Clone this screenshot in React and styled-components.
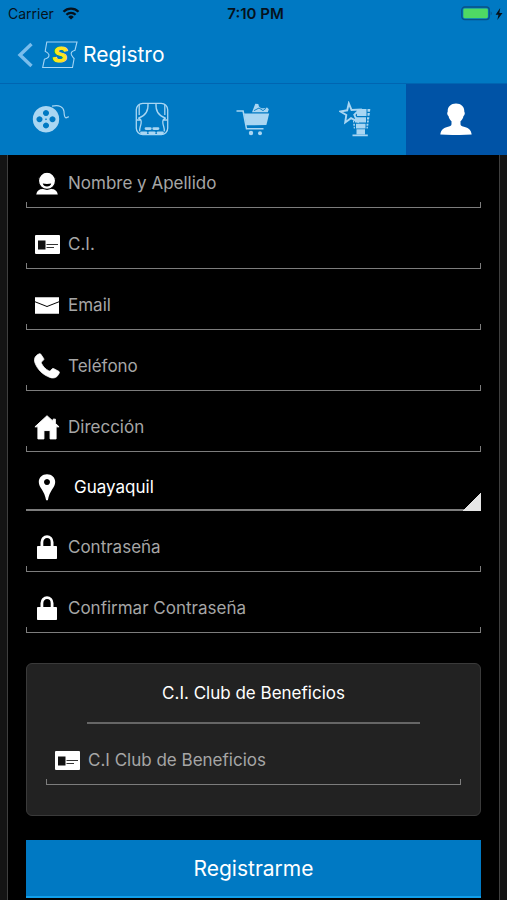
import React, { useState } from "react";
import styled, { createGlobalStyle } from "styled-components";

const GlobalStyle = createGlobalStyle`
  * {
    box-sizing: border-box;
  }

  body {
    margin: 0;
    background: #141414;
    color: #fff;
    font-family: Inter, "Liberation Sans", sans-serif;
  }

  button, input, select {
    font-family: inherit;
  }
`;

const Screen = styled.div`
  display: flex;
  flex-direction: column;
  min-height: 100vh;
`;

const Header = styled.header`
  background: #0079c3;
  border-bottom: 1px solid #0065b1;
`;

const StatusBar = styled.div`
  display: grid;
  grid-template-columns: 1fr auto 1fr;
  align-items: center;
  height: 27px;
  padding: 0 4px 0 8px;
  color: #06121c;
  font-size: 14px;
`;

const StatusLeft = styled.div`
  display: flex;
  align-items: center;
  gap: 8px;
`;

const StatusRight = styled.div`
  display: flex;
  align-items: center;
  justify-content: flex-end;
  gap: 2px;
`;

const Clock = styled.span`
  font-size: 15px;
  font-weight: 600;
`;

const TitleBar = styled.div`
  display: flex;
  align-items: center;
  height: 56px;
  padding: 0 16px;
`;

const BackButton = styled.button`
  display: flex;
  padding: 0;
  margin-right: 8px;
  border: 0;
  background: none;
  cursor: pointer;
`;

const Title = styled.h1`
  margin: 0 0 0 5px;
  font-size: 21px;
  line-height: 28px;
  font-weight: 400;
`;

const Tabs = styled.nav`
  display: grid;
  grid-template-columns: repeat(5, 1fr);
  background: #0079c3;
`;

const Tab = styled.button`
  display: flex;
  align-items: center;
  justify-content: center;
  height: 71px;
  padding: 0 0 2px;
  border: 0;
  background: ${({ $active }) => ($active ? "#0053a6" : "transparent")};
  color: ${({ $active }) => ($active ? "#fff" : "#a9d6f2")};
  cursor: pointer;
`;

const Panel = styled.form`
  flex: 1;
  display: flex;
  flex-direction: column;
  margin: 0 7px;
  padding: 3px 18px 2px;
  border: solid #3f3f3f;
  border-width: 0 1px;
  background: #000;
`;

const Fields = styled.div`
  display: flex;
  flex-direction: column;
  gap: 11px;
`;

const tick = "linear-gradient(#7d7d7d, #7d7d7d)";

const Field = styled.div`
  display: flex;
  align-items: center;
  height: 50px;
  padding-left: 8px;
  background: ${tick} left bottom / 1px 6px no-repeat,
    ${tick} right bottom / 1px 6px no-repeat,
    ${tick} left bottom / 100% 1px no-repeat;
`;

const SelectField = styled(Field)`
  height: 48px;
  background: linear-gradient(135deg, transparent 50%, #e6e6e6 50%) right bottom /
      18px 19px no-repeat,
    ${tick} left bottom / 100% 2px no-repeat;
`;

const FieldIcon = styled.label`
  display: flex;
  justify-content: center;
  width: 26px;
  margin-right: 8px;
`;

const Input = styled.input`
  flex: 1;
  min-width: 0;
  height: 40px;
  padding: 0;
  border: 0;
  outline: 0;
  background: transparent;
  color: #fff;
  font-size: 17px;

  &::placeholder {
    color: #a6a6a6;
    opacity: 1;
  }
`;

const Select = styled.select`
  flex: 1;
  min-width: 0;
  height: 40px;
  padding: 0 24px 0 6px;
  border: 0;
  outline: 0;
  appearance: none;
  background: transparent;
  color: #fff;
  font-size: 17px;

  option {
    background: #222;
  }
`;

const Card = styled.section`
  margin: 30px 0 24px;
  padding: 1px 19px 30px;
  border: 1px solid #3a3a3a;
  border-radius: 6px;
  background: #222;
`;

const CardTitle = styled.h2`
  margin: 0 41px 11px;
  border-bottom: 2px solid #666;
  font-size: 17px;
  line-height: 57px;
  font-weight: 400;
  text-align: center;
`;

const SubmitButton = styled.button`
  height: 58px;
  padding: 0;
  border: 0;
  border-bottom: 2px solid #129fea;
  background: #0079c3;
  color: #fff;
  font-size: 21px;
  cursor: pointer;
`;

const WifiIcon = () => (
  <svg width="18" height="13" viewBox="0 0 18 13" fill="none" stroke="#06121c" strokeWidth="2.3">
    <path d="M1.5 4.8a10.6 10.6 0 0 1 15 0" />
    <path d="M4.4 7.8a6.6 6.6 0 0 1 9.2 0" />
    <path d="M9 12.6 6.2 9.9a4 4 0 0 1 5.6 0z" fill="#06121c" stroke="none" />
  </svg>
);

const BatteryIcon = () => (
  <svg width="32" height="15" viewBox="0 0 32 15">
    <rect x="0.8" y="1" width="27.5" height="12.6" rx="3" fill="none" stroke="#0a5286" strokeWidth="1.3" />
    <rect x="2.3" y="2.4" width="24.6" height="9.8" rx="1.4" fill="#4fd964" />
    <path d="M29.7 5.2q2 2.1 0 4.2z" fill="#0a5286" />
  </svg>
);

const BoltIcon = () => (
  <svg width="8" height="12" viewBox="0 0 8 12">
    <path d="M5.2 0 .6 6.7h2.9L2.3 12 7.5 4.9H4.4z" fill="#06121c" />
  </svg>
);

const BackIcon = () => (
  <svg width="18" height="26" viewBox="0 0 18 26" fill="none">
    <path d="M15.5 2 4 13l11.5 11" stroke="#79bdec" strokeWidth="3.4" />
  </svg>
);

const TicketLogo = () => (
  <svg width="36" height="28" viewBox="0 0 36 28">
    <path
      d="M4.8 1H35l-2 8.2c-3.4 1-4.4 2.7-3.5 4.8 1 1.7 1.6 2.7 2.6 3.5l-1.6 9H.7l1.7-8.2c3-.8 5-2.6 4.5-4.6-.4-1.7-1.6-2.4-3.7-3.5z"
      fill="none"
      stroke="#a5d5f5"
      strokeWidth="1.1"
    />
    <text
      x="18"
      y="21"
      fill="#ffe61c"
      stroke="#ffe61c"
      strokeWidth="1"
      textAnchor="middle"
      fontFamily="Liberation Sans, sans-serif"
      fontSize="22"
      fontStyle="italic"
      fontWeight="700"
    >
      S
    </text>
  </svg>
);

const ReelIcon = () => (
  <svg width="38" height="30" viewBox="0 0 38 30">
    <path
      fill="currentColor"
      fillRule="evenodd"
      d="M14 2a13.2 13.2 0 1 0 .01 0zM14 5.9a3 3 0 1 1-.01 0zM14 18.5a3 3 0 1 1-.01 0zM7.5 12.2a3 3 0 1 1-.01 0zM20.5 12.2a3 3 0 1 1-.01 0zM14 14.4a.8.8 0 1 1-.01 0z"
    />
    <path
      d="M20 2.2c7-1.4 11.5.3 12 5.3.2 3.3.2 6.3 2 6.3 1.5 0 1.3-1.2 2.9-1"
      fill="none"
      stroke="currentColor"
      strokeWidth="1.2"
    />
  </svg>
);

const StageIcon = () => (
  <svg width="34" height="34" viewBox="0 0 34 34" fill="none" stroke="currentColor" strokeWidth="1.3">
    <rect x="1.3" y="1.3" width="31.4" height="31.4" rx="6.5" />
    <path d="M4.2 2.7V13M29.8 2.7V13M13 1.5c.5 7-2.5 12.5-9.5 14.5M21 1.5c-.5 7 2.5 12.5 9.5 14.5" />
    <path d="M3.2 16.2c2.8.8 3.4 2.5 2.9 5.2-.5 3-1.8 4.9-1.4 8M30.8 16.2c-2.8.8-3.4 2.5-2.9 5.2.5 3 1.8 4.9 1.4 8M2 18h3.5M28.5 18H32" />
    <path
      d="M11 26.6h4.3M18.7 26.6H23M6.5 30.8H11M14.7 30.8h4.6M23 30.8h4.5"
      strokeWidth="2.8"
      strokeLinecap="round"
    />
  </svg>
);

const CartIcon = () => (
  <svg width="36" height="34" viewBox="0 0 36 34" fill="none">
    <path d="M1.5 9h6.6l3.4 17.8h17" stroke="currentColor" strokeWidth="1.5" />
    <path d="M9 11.5h25.2L31.4 23l-20.3.3z" fill="currentColor" />
    <path d="m17 10.3 3.3-8.6 3 .4.7 2.4 2.2 1.7h3.5l2.4-.7 1.7 1.7-1 3.1z" fill="currentColor" />
    <path d="m19 8.6 5-2.6 4 2.6 3-2.3" stroke="#0079c3" strokeWidth="0.9" />
    <circle cx="16" cy="31" r="2.2" fill="currentColor" />
    <circle cx="25" cy="31.3" r="2" fill="currentColor" />
  </svg>
);

const PremiereIcon = () => (
  <svg width="32" height="36" viewBox="0 0 32 36">
    <path
      fill="currentColor"
      d="M18 8h9.500v7H18zM16 16.200h11v5.300H16zM17 22.700h9.500v4.800H17zM17.500 28.300h8.500v4.900h-8.500zM13.500 33.500h15.300v1.800H13.500z"
    />
    <path
      fill="currentColor"
      d="M28.500 8h2.800l-.3 2.800h-2.500zM28.500 12h2.400l-.4 2.800h-2zM28 16.200h2.400l-.4 2.300h-2zM28 19.600h1.900l-.3 2H28zM27.500 22.700h2l-.3 2h-1.700zM27.500 25.700H29l-.2 1.800h-1.300zM14 19.600h1.200v2H14zM14.200 22.700h1.700v2h-1.500zM14.600 25.700h1.300v1.800h-1.100z"
    />
    <path
      d="m9.800 2.400 2.700 6.500 8.200-.4-5.400 5.200 3 6.700-6.300-3.200-5.800 4.200 1.100-7.500-6-3.400 6.900-1.200z"
      fill="#0079c3"
      stroke="currentColor"
      strokeWidth="1.9"
    />
  </svg>
);

const ProfileIcon = () => (
  <svg width="32" height="32" viewBox="0 0 32 32">
    <path
      fill="currentColor"
      d="M16 .5c5.3 0 8.6 3.5 8.3 8.3.9.9.5 3.3-.8 4.2-.5 2.4-1.5 4-3 5.3v2.9c0 1.8 1.7 2.1 4.3 2.9 4.2 1.2 6.2 3.100 6.900 7.400-9.500.7-21.900.7-31.400 0 .7-4.300 2.700-6.200 6.900-7.400 2.600-.8 4.300-1.100 4.300-2.900v-2.900c-1.500-1.300-2.500-2.900-3-5.300-1.300-.9-1.700-3.300-.8-4.200C7.400 4 10.700.5 16 .5z"
    />
  </svg>
);

const PersonIcon = () => (
  <svg width="22" height="23" viewBox="0 0 22 23">
    <path d="M.2 22.5c.6-3.500 3-5.400 6.300-5.400h9c3.300 0 5.700 1.900 6.300 5.400z" fill="#fff" />
    <circle cx="11" cy="8.800" r="8.600" fill="#fff" stroke="#000" strokeWidth="1.300" />
    <path d="M6.800 11.600q4.200.6 8.400 0c-.4 4-8 4-8.400 0z" fill="#000" />
  </svg>
);

const CardIcon = () => (
  <svg width="25" height="19" viewBox="0 0 25 19">
    <rect width="25" height="19" rx="1" fill="#fff" />
    <path d="M3 5.5h7.5v9H3z" fill="#111" />
    <path d="M11.5 9.5H23M11.5 12.5H19" stroke="#333" strokeWidth="1.2" />
  </svg>
);

const MailIcon = () => (
  <svg width="24" height="17" viewBox="0 0 24 17">
    <path d="M0 .2h24v4L12 9 0 4.2z" fill="#fff" />
    <path d="M0 5.2 12 10l12-4.8v11.5H0z" fill="#fff" />
  </svg>
);

const PhoneIcon = () => (
  <svg width="28" height="28" viewBox="0 0 28 28">
    <path
      fill="#fff"
      stroke="#fff"
      strokeWidth="0.8"
      d="M5.8.8c.8-.3 1.3 0 1.800.9l2.800 4.200c.5.9.2 1.400-.5 2L8.300 9.500c-.6.6-.4 1.300 0 2.100 1.700 3.300 4.200 5.800 7.500 7.500.8.4 1.400.4 2-.3l1.700-1.700c.6-.6 1.200-.6 1.900-.2l5.200 2.800c.8.5 1 1 .6 1.800-1.600 4.400-5.500 6.500-10 4.800C9.500 23.500 3.800 17.900 1 10.500-.6 6 1.500 2.500 5.800.8z"
    />
  </svg>
);

const HomeIcon = () => (
  <svg width="28" height="27" viewBox="0 0 28 27">
    <path
      fill="#fff"
      stroke="#fff"
      strokeLinejoin="round"
      d="M14 .8 1 12.8h3.200v13h6.500v-9h6.600v9h6.500v-13H27l-4-3.800V4.500h-2.500v2.200z"
    />
  </svg>
);

const PinIcon = () => (
  <svg width="18" height="27" viewBox="0 0 18 27">
    <path
      fill="#fff"
      fillRule="evenodd"
      d="M9 .2c4.800 0 8.200 3.300 8.200 7.700 0 5.800-5.800 8.300-7.300 18.400H8.100C6.600 16.200.8 13.700.8 7.900.8 3.500 4.200.2 9 .2zM9 5.100a3 3 0 1 0 .01 0z"
    />
  </svg>
);

const LockIcon = () => (
  <svg width="20" height="24" viewBox="0 0 20 24">
    <rect y="11" width="20" height="13" rx="0.8" fill="#fff" />
    <path d="M4.9 12V7.200a5.100 5.500 0 0 1 10.200 0V12" fill="none" stroke="#fff" strokeWidth="2.8" />
  </svg>
);

const tabs = [
  { id: "cartelera", label: "Cartelera", Icon: ReelIcon },
  { id: "salas", label: "Salas", Icon: StageIcon },
  { id: "compras", label: "Compras", Icon: CartIcon },
  { id: "estrenos", label: "Estrenos", Icon: PremiereIcon },
  { id: "perfil", label: "Perfil", Icon: ProfileIcon },
];

const TextField = ({ id, type = "text", label, Icon }) => (
  <Field>
    <FieldIcon htmlFor={id}>
      <Icon />
    </FieldIcon>
    <Input id={id} name={id} type={type} placeholder={label} aria-label={label} />
  </Field>
);

const App = () => {
  const [activeTab, setActiveTab] = useState("perfil");
  const [city, setCity] = useState("Guayaquil");

  return (
    <Screen>
      <GlobalStyle />
      <Header>
        <StatusBar>
          <StatusLeft>
            Carrier
            <WifiIcon />
          </StatusLeft>
          <Clock>7:10 PM</Clock>
          <StatusRight>
            <BatteryIcon />
            <BoltIcon />
          </StatusRight>
        </StatusBar>
        <TitleBar>
          <BackButton type="button" aria-label="Volver">
            <BackIcon />
          </BackButton>
          <TicketLogo />
          <Title>Registro</Title>
        </TitleBar>
      </Header>

      <Tabs>
        {tabs.map(({ id, label, Icon }) => (
          <Tab
            key={id}
            type="button"
            aria-label={label}
            $active={id === activeTab}
            onClick={() => setActiveTab(id)}
          >
            <Icon />
          </Tab>
        ))}
      </Tabs>

      <Panel onSubmit={(e) => e.preventDefault()}>
        <Fields>
          <TextField id="nombre" label="Nombre y Apellido" Icon={PersonIcon} />
          <TextField id="ci" label="C.I." Icon={CardIcon} />
          <TextField id="email" type="email" label="Email" Icon={MailIcon} />
          <TextField id="telefono" type="tel" label="Teléfono" Icon={PhoneIcon} />
          <TextField id="direccion" label="Dirección" Icon={HomeIcon} />
          <SelectField>
            <FieldIcon htmlFor="ciudad">
              <PinIcon />
            </FieldIcon>
            <Select
              id="ciudad"
              aria-label="Ciudad"
              value={city}
              onChange={(e) => setCity(e.target.value)}
            >
              <option>Guayaquil</option>
            </Select>
          </SelectField>
          <TextField id="clave" type="password" label="Contraseña" Icon={LockIcon} />
          <TextField id="clave2" type="password" label="Confirmar Contraseña" Icon={LockIcon} />
        </Fields>

        <Card>
          <CardTitle>C.I. Club de Beneficios</CardTitle>
          <TextField id="club" label="C.I Club de Beneficios" Icon={CardIcon} />
        </Card>

        <SubmitButton type="submit">Registrarme</SubmitButton>
      </Panel>
    </Screen>
  );
};

export default App;
